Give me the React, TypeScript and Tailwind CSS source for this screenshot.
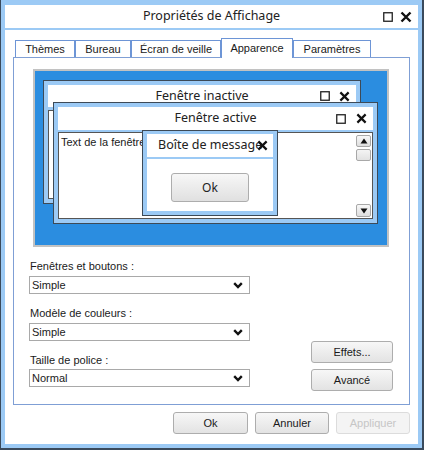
import React from "react";

const XIcon = ({ size = 12, sw = 2.4 }: { size?: number; sw?: number }) => (
  <svg width={size} height={size} viewBox="0 0 12 12" className="block">
    <path d="M1.5 1.5 L10.5 10.5 M10.5 1.5 L1.5 10.5" stroke="#111" strokeWidth={sw} fill="none" />
  </svg>
);

const SquareIcon = ({ size = 10 }: { size?: number }) => (
  <svg width={size} height={size} viewBox="0 0 10 10" className="block">
    <rect x="0.75" y="0.75" width="8.5" height="8.5" fill="none" stroke="#222" strokeWidth="1.3" />
  </svg>
);

const Chevron = () => (
  <svg width="10" height="7" viewBox="0 0 10 7" className="block">
    <path d="M1.2 1.2 L5 5 L8.8 1.2" stroke="#111" strokeWidth="2.4" fill="none" />
  </svg>
);

const Select = ({ value }: { value: string }) => (
  <div className="h-[18px] w-[221px] border border-[#a9a9a9] bg-white flex items-center justify-between pl-[2px] pr-[6px] leading-none">
    <span>{value}</span>
    <Chevron />
  </div>
);

const Btn = ({ label, w, disabled = false }: { label: string; w: string; disabled?: boolean }) => (
  <div
    className={
      disabled
        ? `${w} h-[22px] rounded-[3px] border border-[#dcdcdc] bg-[#f4f4f4] text-[#c6c6c6] flex items-center justify-center`
        : `${w} h-[22px] rounded-[3px] border border-[#adadad] bg-gradient-to-b from-[#f7f7f7] to-[#e3e3e3] text-[#1a1a1a] flex items-center justify-center`
    }
  >
    {label}
  </div>
);

const Tab = ({ label, w, active = false }: { label: string; w: string; active?: boolean }) => (
  <div
    className={
      active
        ? `${w} h-[20px] -mb-px z-10 bg-white border border-b-0 border-[#6d95d6] flex items-center justify-center pb-[1px]`
        : `${w} h-[17px] bg-white border border-b-0 border-[#6d95d6] flex items-center justify-center`
    }
  >
    {label}
  </div>
);

const ScrollBtn = ({ dir, cls }: { dir: "up" | "down"; cls: string }) => (
  <div className={`absolute right-[1px] w-[15px] rounded-[2px] border border-[#a8a8a8] bg-gradient-to-b from-[#f8f8f8] to-[#dedede] flex items-center justify-center ${cls}`}>
    <svg width="8" height="6" viewBox="0 0 8 6" className="block">
      {dir === "up" ? <path d="M4 0.5 L7.5 5.5 L0.5 5.5 Z" fill="#111" /> : <path d="M0.5 0.5 L7.5 0.5 L4 5.5 Z" fill="#111" />}
    </svg>
  </div>
);

export default function App() {
  return (
    <div className="w-[424px] h-[450px] bg-[#9ccaf5] border-l border-r-2 border-b-2 border-[#3a4a5c] pt-[5px] pl-[4px] pr-[4px] pb-[4px] flex flex-col font-['Liberation_Sans',sans-serif] text-[11px] text-[#1a1a1a]">
      <div className="flex-1 bg-white flex flex-col">
        {/* title bar */}
        <div className="h-[23px] relative flex items-center justify-center font-['Noto_Sans',sans-serif] text-[12.5px] text-[#222]">
          Propriétés de Affichage
          <div className="absolute right-[6px] top-0 h-full flex items-center gap-[7px]">
            <SquareIcon />
            <XIcon size={12} />
          </div>
        </div>
        <div className="h-[2px] bg-[#9ccaf5]" />

        <div className="px-[8px] pt-[8px] flex flex-col">
          {/* tabs */}
          <div className="flex items-end pl-[2px] h-[19px]">
            <Tab label="Thèmes" w="w-[60px]" />
            <Tab label="Bureau" w="w-[56px]" />
            <Tab label="Écran de veille" w="w-[90px]" />
            <Tab label="Apparence" w="w-[72px]" active />
            <Tab label="Paramètres" w="w-[78px]" />
          </div>

          {/* panel */}
          <div className="h-[348px] border border-[#7f9fd5] flex flex-col">
            {/* preview */}
            <div className="mt-[11px] ml-[19px] w-[356px] h-[178px] border-2 border-[#c2c2c2] bg-[#2b8de0] relative overflow-hidden font-['Noto_Sans',sans-serif]">
              {/* inactive window */}
              <div className="absolute left-[8px] top-[9px] w-[318px] h-[124px] border border-[#3d4a57] bg-[#9ccaf5] px-[4px] pt-[4px] pb-[4px] flex flex-col">
                <div className="h-[22px] bg-white relative flex items-center justify-center text-[12.5px] text-[#222]">
                  Fenêtre inactive
                  <div className="absolute right-[6px] top-0 h-full flex items-center gap-[9px]">
                    <SquareIcon />
                    <XIcon size={11} />
                  </div>
                </div>
                <div className="mt-[3px] flex-1 bg-white border border-[#555]" />
              </div>

              {/* active window */}
              <div className="absolute left-[18px] top-[31px] w-[325px] h-[122px] border border-[#3d4a57] bg-[#9ccaf5] px-[4px] pt-[4px] pb-[4px] flex flex-col">
                <div className="h-[23px] bg-white relative flex items-center justify-center text-[12.5px] text-[#222]">
                  Fenêtre active
                  <div className="absolute right-[6px] top-0 h-full flex items-center gap-[10px]">
                    <SquareIcon />
                    <XIcon size={11} />
                  </div>
                </div>
                <div className="mt-[2px] flex-1 bg-white border border-[#555] relative">
                  <div className="pl-[2px] pt-[2px] text-[11px] font-['Liberation_Sans',sans-serif] leading-[14px]">Text de la fenêtre</div>
                  <ScrollBtn dir="up" cls="top-[2px] h-[12px]" />
                  <div className="absolute right-[1px] top-[16px] w-[15px] h-[12px] rounded-[2px] border border-[#a8a8a8] bg-gradient-to-b from-[#f4f4f4] to-[#e2e2e2]" />
                  <ScrollBtn dir="down" cls="bottom-[1px] h-[13px]" />
                </div>
              </div>

              {/* message box */}
              <div className="absolute left-[107px] top-[59px] w-[136px] h-[86px] border border-[#3d4a57] bg-[#9ccaf5] px-[4px] pt-[3px] pb-[4px] flex flex-col z-20">
                <div className="h-[23px] bg-white relative flex items-center pl-[11px] text-[12.5px] text-[#222] whitespace-nowrap">
                  Boîte de message
                  <div className="absolute right-[5px] top-0 h-full flex items-center">
                    <XIcon size={11} />
                  </div>
                </div>
                <div className="mt-[2px] flex-1 bg-white flex justify-center pt-[14px]">
                  <div className="w-[78px] h-[29px] rounded-[3px] border border-[#adadad] bg-gradient-to-b from-[#f7f7f7] to-[#e0e0e0] flex items-center justify-center text-[12px] text-[#222]">
                    Ok
                  </div>
                </div>
              </div>
            </div>

            {/* form */}
            <div className="mt-[12px] flex items-start">
              <div className="pl-[15px] flex flex-col">
                <div className="h-[14px] leading-[14px] pl-[1px]">Fenêtres et boutons :</div>
                <div className="mt-[3px]"><Select value="Simple" /></div>
                <div className="mt-[12px] h-[14px] leading-[14px] pl-[1px]">Modèle de couleurs :</div>
                <div className="mt-[3px]"><Select value="Simple" /></div>
                <div className="mt-[12px] h-[14px] leading-[14px] pl-[1px]">Taille de police :</div>
                <div className="mt-[2px]"><Select value="Normal" /></div>
              </div>
              <div className="ml-auto mr-[16px] mt-[82px] flex flex-col gap-[6px]">
                <Btn label="Effets..." w="w-[82px]" />
                <Btn label="Avancé" w="w-[82px]" />
              </div>
            </div>
          </div>

          {/* bottom buttons */}
          <div className="mt-[7px] flex justify-end gap-[7px]">
            <Btn label="Ok" w="w-[75px]" />
            <Btn label="Annuler" w="w-[74px]" />
            <Btn label="Appliquer" w="w-[74px]" disabled />
          </div>
        </div>
      </div>
    </div>
  );
}
